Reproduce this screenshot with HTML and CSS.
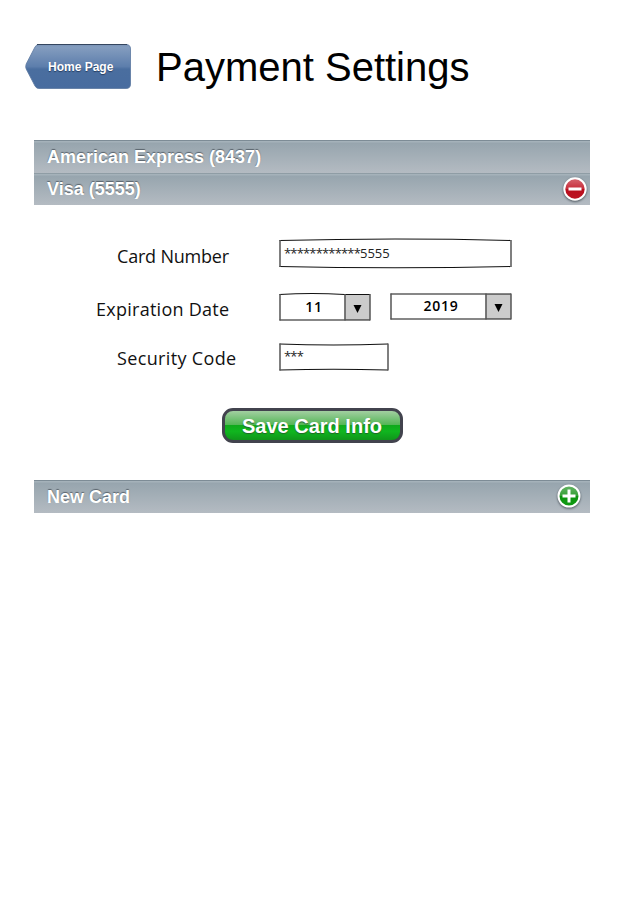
FILE: index.html
```
<!DOCTYPE html>
<html lang="en">
<head>
<meta charset="utf-8">
<title>Payment Settings</title>
<link rel="stylesheet" href="styles.css">
</head>
<body>
<header class="header">
  <a class="home">
    <svg class="art" width="108" height="48" viewBox="0 0 108 48">
      <defs><linearGradient id="blue" x1="0" y1="0" x2="0" y2="1"><stop offset="0" stop-color="#7892b6"/><stop offset=".06" stop-color="#849dbf"/><stop offset=".5" stop-color="#5d7eac"/><stop offset=".56" stop-color="#4a6e9f"/><stop offset="1" stop-color="#486c9f"/></linearGradient></defs>
      <path d="M14.500 1.500H102Q106.500 1.500 106.500 6V41Q106.500 45.500 102 45.500H14.500Q12.500 45.500 11 43L2.200 26Q1.200 23.500 2.200 21L11 4Q12.500 1.500 14.500 1.500Z" fill="url(#blue)" stroke="#5a779f" stroke-width=".8"/>
      <path d="M13 1.500H103" stroke="#35465f"/>
    </svg>
    <span class="home-text">Home Page</span>
  </a>
  <h1 class="title">Payment Settings</h1>
</header>
<main class="cards">
  <div class="bar"><span class="bar-text amex">American Express (8437)</span></div>
  <div class="bar visa"><span class="bar-text">Visa (5555)</span>
    <svg class="icon minus" width="28" height="28" viewBox="0 0 28 28">
      <defs><linearGradient id="red" x1="0" y1="0" x2="0" y2="1"><stop offset="0" stop-color="#d66872"/><stop offset=".48" stop-color="#c72f3c"/><stop offset=".52" stop-color="#b80d1c"/><stop offset="1" stop-color="#bd1523"/></linearGradient></defs>
      <circle cx="14" cy="14" r="10.700" fill="url(#red)" stroke="#fff" stroke-width="2"/><path d="M7.500 14H20.500" stroke="#fff" stroke-width="3"/>
    </svg>
  </div>
  <section class="form">
    <div class="row row-number">
      <label class="label l-number">Card Number</label>
      <div class="field number">
        <svg class="art" width="234" height="32" viewBox="0 0 234 32"><path class="ink" d="M1.500 2.500Q117 -.5 232.500 2.500"/><path class="ink" d="M1.500 28.500Q117 31 232.500 28.500"/><path class="side" d="M2 2V29M233 2V29"/></svg>
        <span class="value"><span class="stars">************</span><span class="digits">5555</span></span>
      </div>
    </div>
    <div class="row row-date">
      <label class="label l-date">Expiration Date</label>
      <div class="field month">
        <svg class="art" width="93" height="29" viewBox="0 0 93 29"><path d="M66.500 2.500H92V28H66.500Z" fill="#ccc"/><path class="ink" d="M1.500 2.500Q34 .5 66.500 2.500H92M1.500 28H92"/><path class="side" d="M2 2V28.500M67 2V28.500M92 2V28.500"/><path d="M75.500 13H83.500L79.500 21Z"/></svg>
        <span class="choice">11</span>
      </div>
      <div class="field year">
        <svg class="art" width="123" height="29" viewBox="0 0 123 29"><path d="M96.500 2H122V27H96.500Z" fill="#ccc"/><path class="ink" d="M1.500 2H122M1.500 27H122"/><path class="side" d="M2 1.500V27.500M97 1.500V27.500M122 1.500V27.500"/><path d="M105.500 12H113.500L109.500 20Z"/></svg>
        <span class="choice">2019</span>
      </div>
    </div>
    <div class="row row-code">
      <label class="label l-code">Security Code</label>
      <div class="field code">
        <svg class="art" width="111" height="29" viewBox="0 0 111 29"><path class="ink" d="M1.500 2Q55 4 110 2M1.500 28Q55 26.500 110 28"/><path class="side" d="M2 1.500V28.500M110 1.500V28.500"/></svg>
        <span class="value"><span class="stars">***</span></span>
      </div>
    </div>
    <button class="save">Save Card Info</button>
  </section>
  <div class="bar"><span class="bar-text">New Card</span>
    <svg class="icon plus" width="28" height="28" viewBox="0 0 28 28">
      <defs><linearGradient id="green" x1="0" y1="0" x2="0" y2="1"><stop offset="0" stop-color="#68b568"/><stop offset=".48" stop-color="#35a036"/><stop offset=".52" stop-color="#0d930f"/><stop offset="1" stop-color="#109b13"/></linearGradient></defs>
      <circle cx="14" cy="14" r="10.500" fill="url(#green)" stroke="#fff" stroke-width="2"/><path d="M7.500 14H20.500M14 7.500V20.500" stroke="#fff" stroke-width="3"/>
    </svg>
  </div>
</main>
</body>
</html>
```
FILE: styles.css
```
* { box-sizing: border-box; }
body { margin: 0; width: 620px; height: 900px; background: #fff; color: #000; font-family: "Liberation Sans", Arial, sans-serif; }
.header { display: flex; height: 140px; padding: 43px 0 0 24px; }
.home { position: relative; width: 108px; height: 48px; }
.art { display: block; }
.home-text { position: absolute; left: 24px; top: 17px; font: bold 12px/14px "Liberation Sans", Arial, sans-serif; color: #fff; text-shadow: 0 1px 1px #263d60; white-space: nowrap; }
.title { margin: 1px 0 0 24px; font-size: 40px; line-height: 46px; font-weight: normal; white-space: nowrap; }
.cards { width: 556px; margin-left: 34px; }
.bar { display: flex; align-items: flex-start; justify-content: space-between; height: 33px; padding: 7px 0 0 13px; background: linear-gradient(#7d8c96 0 1px, #a5b2ba 1px 2px, #97a5ae 3px, #a4afb7 50%, #b4bbc2); }
.visa { height: 32px; padding-top: 6px; background: linear-gradient(#8f9da5 0 1px, #a5b2ba 1px 2px, #97a5ae 3px, #a4afb7 50%, #b4bbc2); }
.bar-text { color: #fff; font-weight: bold; font-size: 18px; line-height: 21px; text-shadow: 0 -1px 1px #59636c; white-space: nowrap; }
.icon { filter: drop-shadow(0 1px 1px #4c555c); }
.minus { margin: -4px 1.500px 0 0; }
.plus { margin: -5px 7px 0 0; }
.form { height: 275px; padding-top: 33px; }
.row { display: flex; }
.row-number { height: 54px; }
.row-date { height: 50px; }
.row-code { height: 66px; }
.label { width: 182px; font: 18px/24px "Comic Sans MS", "Open Sans", sans-serif; color: #111; white-space: nowrap; padding-top: 6px; }
.l-number, .l-code { width: 161px; margin-left: 83px; }
.l-number { letter-spacing: -.2px; }
.l-date { margin-left: 62px; padding-top: 5px; letter-spacing: .26px; }
.l-code { padding-top: 4px; letter-spacing: .35px; }
.field { position: relative; flex: none; }
.month { width: 111px; }
.ink { fill: none; stroke: #111; stroke-width: 1.200; }
.side { fill: none; stroke: #555; stroke-width: 1.500; }
.value { position: absolute; left: 6px; top: 6px; display: flex; font: 13px/18px "Comic Sans MS", "Open Sans", sans-serif; color: #222; }
.code .value { top: 5px; }
.stars { letter-spacing: -.83px; }
.digits { letter-spacing: 0; }
.choice { position: absolute; top: 6px; left: 2px; width: 68px; text-align: center; font: 600 14px/18px "Comic Sans MS", "Open Sans", sans-serif; letter-spacing: .7px; }
.year .choice { width: 100px; top: 5px; }
.save { display: block; width: 181px; height: 35px; margin-left: 188px; padding: 1px 1px 0 0; border: 3px solid #42434e; border-radius: 11px; background: linear-gradient(#a2cfa1, #55b657 47%, #0eaa1b 50%, #10b61f 70%, #10951b); color: #fff; font: bold 20px/28px "Liberation Sans", Arial, sans-serif; text-shadow: 0 1px 1px #246329; white-space: nowrap; }
```
